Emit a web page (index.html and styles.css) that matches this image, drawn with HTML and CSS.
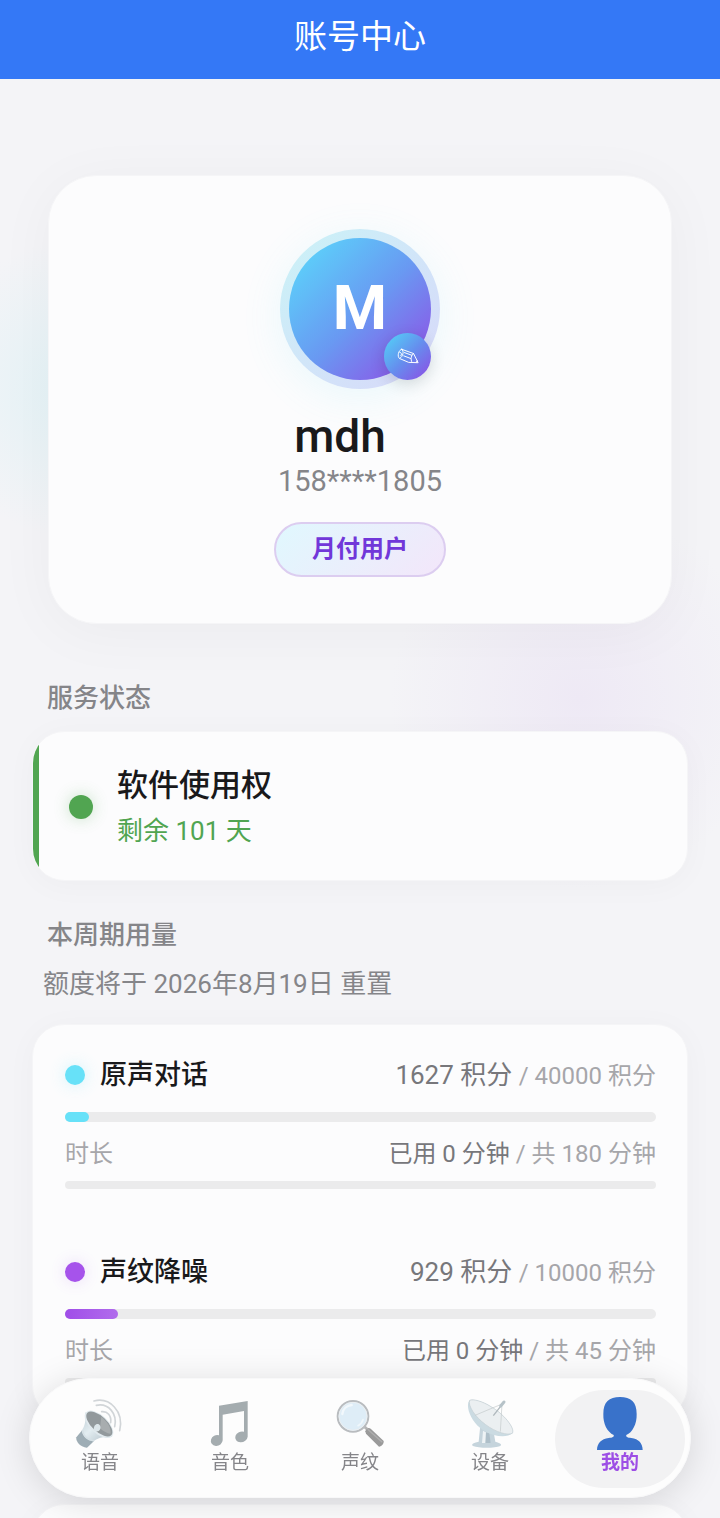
FILE: index.html
```html
<!DOCTYPE html>
<html lang="zh-CN">
<head>
  <meta charset="UTF-8" />
  <meta name="viewport" content="width=device-width, initial-scale=1.0" />
  <title>账号中心</title>
  <link rel="stylesheet" href="styles.css">
</head>
<body>
  <header class="topbar">
    <h1>账号中心</h1>
  </header>

  <main class="content">
    <section class="card profile">
      <div class="avatar">
        <span class="avatar-letter">M</span>
        <button class="avatar-edit" type="button" aria-label="编辑头像">
          <svg viewBox="0 0 66 52" fill="none" stroke="#fff" stroke-width="3" stroke-linejoin="round" stroke-linecap="round">
            <path d="M14 4 L50 17 L64 45 L35 44 L7 32 C-1 26 4 5 14 4 Z" />
            <path d="M50 17 C43 21 40 34 45 44 M14 4 C22 9 18 27 8 31 M22 14 L44 22 M20 24 L41 32 M8 13 C14 14 15 20 11 24 M58 44 L61 39" />
          </svg>
        </button>
      </div>
      <h2 class="name">mdh</h2>
      <p class="phone">158****1805</p>
      <span class="plan">月付用户</span>
    </section>

    <h3 class="section-title">服务状态</h3>
    <section class="card status">
      <span class="status-dot"></span>
      <div>
        <p class="status-name">软件使用权</p>
        <p class="status-left">剩余 101 天</p>
      </div>
    </section>

    <h3 class="section-title usage-title">本周期用量</h3>
    <p class="reset">额度将于 2026年8月19日 重置</p>
    <section class="card usage">
      <div class="usage-item">
        <div class="row">
          <span class="usage-name cyan">原声对话</span>
          <span class="points">1627 积分 <small>/ 40000 积分</small></span>
        </div>
        <div class="bar" role="progressbar" aria-label="原声对话积分" aria-valuenow="4"><div class="fill fill-cyan" style="width: 4%"></div></div>
        <div class="row time">
          <span class="muted">时长</span>
          <span>已用 0 分钟 <small>/ 共 180 分钟</small></span>
        </div>
        <div class="bar thin" role="progressbar" aria-label="原声对话时长" aria-valuenow="0"></div>
      </div>
      <div class="usage-item">
        <div class="row">
          <span class="usage-name purple">声纹降噪</span>
          <span class="points">929 积分 <small>/ 10000 积分</small></span>
        </div>
        <div class="bar" role="progressbar" aria-label="声纹降噪积分" aria-valuenow="9"><div class="fill fill-purple" style="width: 9%"></div></div>
        <div class="row time">
          <span class="muted">时长</span>
          <span>已用 0 分钟 <small>/ 共 45 分钟</small></span>
        </div>
        <div class="bar thin" role="progressbar" aria-label="声纹降噪时长" aria-valuenow="0"></div>
      </div>
    </section>

    <section class="card more"></section>
  </main>

  <nav class="tabbar">
    <a class="tab" href="#voice">
      <svg viewBox="0 0 150 150">
        <defs>
          <linearGradient id="horn" x1="0" y1="0" x2="1" y2="1">
            <stop offset="0" stop-color="#bccbd2" /><stop offset=".45" stop-color="#e3edf1" /><stop offset="1" stop-color="#aebdc5" />
          </linearGradient>
        </defs>
        <path d="M22 96 L4 118 C1 132 20 150 36 149 L58 128 Z" fill="#9eadb5" />
        <path d="M31 43 C33 70 30 84 20 98 C23 116 39 129 55 130 C72 117 90 115 112 117 Z" fill="url(#horn)" />
        <path d="M22 96 C25 113 39 127 57 129" fill="none" stroke="#d5e0e5" stroke-width="4" />
        <ellipse cx="72" cy="79" rx="53" ry="27" transform="rotate(43 72 79)" fill="#e1eaee" />
        <ellipse cx="73" cy="78" rx="49" ry="23" transform="rotate(43 73 78)" fill="#92999c" />
        <path d="M79 56 C99 73 108 88 107 107 C99 108 86 101 75 91 Z" fill="#a8adaf" />
        <path d="M56 96 C56 84 61 77 70 78 C79 83 78 94 71 99 C66 102 59 100 56 96" fill="#dce6ea" />
        <path d="M57 9 C103 -3 148 39 134 98 M64 22 C100 14 128 47 119 86 M80 41 C97 39 110 53 107 74" fill="none" stroke="#d1d5d8" stroke-width="5" stroke-linecap="round" />
      </svg>
      <span>语音</span>
    </a>
    <a class="tab" href="#timbre">
      <svg viewBox="0 0 150 150" fill="#a4acaf">
        <path d="M42 23 L128 9 V116 A19 16 -20 1 1 117 101 V39 L53 50 V127 A18 16 -20 1 1 42 112 Z" />
      </svg>
      <span>音色</span>
    </a>
    <a class="tab" href="#voiceprint">
      <svg viewBox="0 0 150 150">
        <path d="M86 84 L96 93" stroke="#b7b7b7" stroke-width="9" />
        <path d="M91 100 C94 90 101 88 107 92 L146 129 C147 138 140 145 132 146 L93 107 Z" fill="#9a9a9a" />
        <path d="M98 94 L142 133" stroke="#b0b0b0" stroke-width="4" />
        <circle cx="54" cy="55" r="46" fill="#deedf7" stroke="#b9bcbf" stroke-width="6" />
        <circle cx="54" cy="55" r="42" fill="none" stroke="#eceff1" stroke-width="3" />
        <path d="M22 48 C24 32 36 22 50 21" fill="none" stroke="#f2f8fc" stroke-width="7" stroke-linecap="round" />
        <path d="M69 83 C77 79 82 72 84 65" fill="none" stroke="#f0f7fb" stroke-width="5" stroke-linecap="round" />
      </svg>
      <span>声纹</span>
    </a>
    <a class="tab" href="#device">
      <svg viewBox="0 0 150 150">
        <path d="M46 82 L41 131 C22 134 18 140 24 144 C42 151 89 151 106 144 C112 139 105 134 91 131 L86 103 Z" fill="#c5d4dc" />
        <path d="M54 98 L51 135 H76 L71 108 Z" fill="#eef3f5" />
        <path d="M63 103 L61 135 H77 L73 106 Z" fill="#aebfc9" />
        <path d="M14 7 C0 22 16 66 45 89 C75 116 125 122 142 106 C152 90 113 45 78 26 C53 10 25 2 14 7 Z" fill="#cbdbe2" />
        <path d="M14 7 C8 22 29 56 62 80 C93 103 128 113 142 106 C152 90 113 45 78 26 C53 10 25 2 14 7 Z" fill="#ebeff1" stroke="#c3cdd2" stroke-width="2" />
        <path d="M30 52 L111 18 L106 101" fill="none" stroke="#c3c8ca" stroke-width="2" />
        <path d="M85 53 L114 16" stroke="#aeb7bc" stroke-width="4" />
        <path d="M107 24 L117 12" stroke="#b6c2c8" stroke-width="9" stroke-linecap="round" />
      </svg>
      <span>设备</span>
    </a>
    <a class="tab active" href="#me" aria-current="page">
      <svg viewBox="0 0 150 150" fill="#3972ca">
        <path d="M75 -3 C108 -3 125 12 125 48 C126 78 112 104 94 111 C92 117 98 119 109 120 C131 123 143 136 143 156 H6 C6 136 19 123 41 120 C52 119 58 117 56 111 C37 102 24 78 25 48 C25 12 42 -3 75 -3 Z" />
      </svg>
      <span>我的</span>
    </a>
  </nav>
</body>
</html>
```

FILE: styles.css
```css
* { box-sizing: border-box; }
body {
  margin: 0;
  height: 100vh;
  display: flex;
  flex-direction: column;
  overflow: hidden;
  font-family: Roboto, "Noto Sans CJK SC", sans-serif;
  color: #19191b;
  background: #f4f4f7;
}
h1, h2, h3, p { margin: 0; }
button { font: inherit; border: none; cursor: pointer; }

.topbar {
  flex: none;
  height: 79px;
  padding-bottom: 6px;
  display: flex;
  align-items: center;
  justify-content: center;
  background: #3478f6;
  color: #fff;
}
.topbar h1 { font-size: 33px; font-weight: 400; line-height: 44px; }

.content {
  flex: 1;
  min-height: 0;
  overflow: hidden;
  padding: 96px 32px 0;
  background:
    radial-gradient(circle at 80px 310px, #e2f2f6 0, rgba(226, 242, 246, 0) 150px),
    radial-gradient(circle at 580px 620px, #eee9f5 0, rgba(238, 233, 245, 0) 190px);
}

.card {
  background: #fcfcfd;
  border-radius: 32px;
  border: 1px solid #f5f5f7;
  box-shadow: 0 4px 32px rgba(0, 0, 0, 0.03);
}

.profile {
  margin: 0 16px 56px;
  padding: 53px 32px 46px;
  border-radius: 48px;
  box-shadow: 0 8px 60px rgba(0, 0, 0, 0.04);
  display: flex;
  flex-direction: column;
  align-items: center;
}
.avatar {
  position: relative;
  width: 160px;
  height: 160px;
  padding: 9px;
  border-radius: 50%;
  background: linear-gradient(135deg, #caf3f7, #d8d8fa);
  box-shadow: 0 8px 40px rgba(95, 220, 250, 0.12);
}
.avatar-letter {
  display: flex;
  align-items: center;
  justify-content: center;
  height: 142px;
  padding-bottom: 4px;
  border-radius: 50%;
  background: linear-gradient(135deg, #5cd0fa 10%, #6999f2 52%, #8f50e6 94%);
  color: #fff;
  font-size: 62px;
  font-weight: 700;
}
.avatar-edit {
  position: absolute;
  right: 9px;
  bottom: 9px;
  width: 47px;
  height: 47px;
  padding: 0;
  border-radius: 50%;
  display: flex;
  align-items: center;
  justify-content: center;
  background: linear-gradient(135deg, #55c9f6 10%, #658fee 50%, #8b50e5 95%);
  box-shadow: 0 4px 16px rgba(0, 0, 0, 0.14);
}
.avatar-edit svg { width: 22px; height: 17px; }
.name {
  margin-top: 21px;
  padding-right: 40px;
  font-size: 46px;
  font-weight: 500;
  line-height: 52px;
}
.phone { font-size: 29px; line-height: 38px; color: #858589; }
.plan {
  margin-top: 22px;
  padding: 0 36px;
  height: 55px;
  line-height: 50px;
  border: 2px solid #dccdf0;
  border-radius: 28px;
  background: linear-gradient(135deg, #e0f8fe, #f3e6fa);
  color: #7137d9;
  font-size: 24px;
  font-weight: 700;
}

.section-title {
  padding-left: 15px;
  margin-bottom: 15px;
  font-size: 26px;
  font-weight: 500;
  line-height: 36px;
  color: #858589;
}

.status {
  position: relative;
  overflow: hidden;
  display: flex;
  align-items: center;
  gap: 24px;
  padding: 32px 36px 31px;
  margin-bottom: 36px;
}
.status::before {
  content: "";
  position: absolute;
  left: 0;
  top: 0;
  bottom: 0;
  width: 6px;
  background: #51a551;
}
.status-dot {
  width: 24px;
  height: 24px;
  border-radius: 50%;
  background: #51a551;
  box-shadow: 0 0 16px rgba(81, 165, 81, 0.3);
}
.status-name { font-size: 31px; line-height: 44px; font-weight: 500; }
.status-left { margin-top: 5px; font-size: 26px; line-height: 36px; color: #51a551; }

.usage-title { margin-bottom: 15px; }
.reset {
  padding-left: 11px;
  margin-bottom: 24px;
  font-size: 26px;
  line-height: 32px;
  color: #858589;
}
.usage { padding: 30px 31px 31px 32px; }
.usage-item + .usage-item { margin-top: 63px; }
.row {
  display: flex;
  justify-content: space-between;
  align-items: center;
  height: 40px;
  line-height: 40px;
  color: #77777b;
}
.usage-name {
  display: flex;
  align-items: center;
  gap: 15px;
  font-size: 27px;
  font-weight: 500;
  color: #19191b;
}
.usage-name::before {
  content: "";
  width: 20px;
  height: 20px;
  border-radius: 50%;
  background: currentColor;
}
.cyan::before { background: #67e1f8; box-shadow: 0 0 16px rgba(103, 225, 248, 0.3); }
.purple::before { background: #a653eb; box-shadow: 0 0 16px rgba(166, 83, 235, 0.2); }
.points { font-size: 26px; }
.row small { font-size: 24px; color: #a6a6aa; }
.bar {
  height: 10px;
  margin-top: 17px;
  border-radius: 5px;
  background: #ebebec;
}
.fill { height: 100%; border-radius: 5px; }
.fill-cyan { background: #67e1f8; }
.fill-purple { background: linear-gradient(90deg, #a04ee8, #b16bec); }
.time { height: 36px; margin-top: 14px; line-height: 36px; font-size: 24px; }
.muted { color: #a6a6aa; }
.bar.thin { height: 8px; margin-top: 9px; border-radius: 4px; }
.more { height: 200px; margin-top: 86px; }

/* floating tab bar */
.tabbar {
  position: fixed;
  left: 29px;
  right: 29px;
  bottom: 20px;
  height: 120px;
  padding: 11px 5px 9px;
  display: flex;
  border: 1px solid #f8f8f9;
  border-radius: 60px;
  background: #fdfdfd;
  box-shadow: 0 4px 36px rgba(0, 0, 0, 0.13);
}
.tab {
  flex: 1;
  display: flex;
  flex-direction: column;
  align-items: center;
  padding-top: 8px;
  border-radius: 49px;
  color: #858589;
  font-size: 19px;
  line-height: 30px;
  text-decoration: none;
}
.tab svg { width: 50px; height: 50px; overflow: visible; }
.tab.active { background: #f2f2f3; color: #9d4ee5; font-weight: 700; }
```
